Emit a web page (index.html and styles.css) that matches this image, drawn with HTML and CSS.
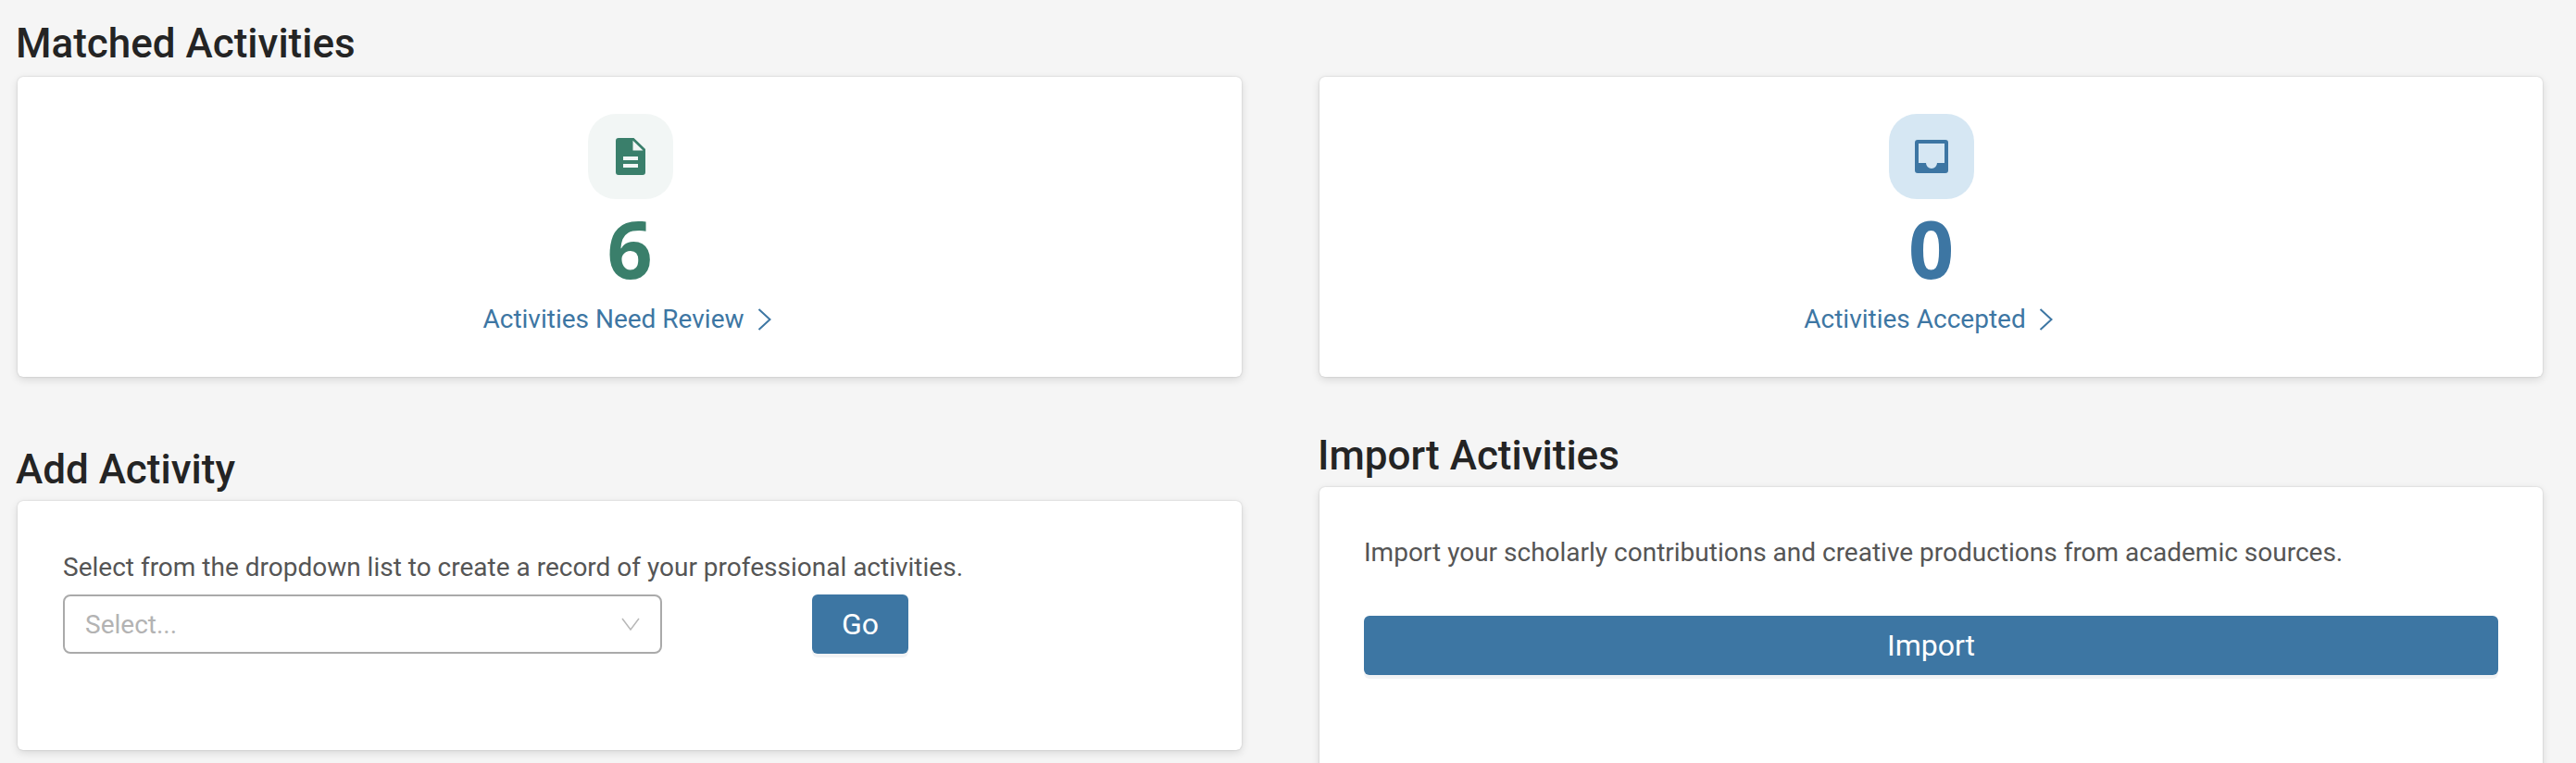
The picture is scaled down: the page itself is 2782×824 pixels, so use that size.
FILE: index.html
```html
<!DOCTYPE html>
<html lang="en">
<head>
    <meta charset="UTF-8">
    <title>Activities</title>
    <link rel="stylesheet" href="styles.css">
</head>
<body>
    <div class="page">
        <section class="column">
            <h2 class="section-title">Matched Activities</h2>
            <div class="card stat-card">
                <div class="stat-icon stat-icon-green">
                    <svg width="32" height="40" viewBox="0 0 32 40"><path fill-rule="evenodd" d="M3 0H19.5L32 12V37a3 3 0 0 1-3 3H3a3 3 0 0 1-3-3V3a3 3 0 0 1 3-3zM18.5 2.8V13.5H29.5zM8 20V24H24V20zM8 28V32H24V28z"/></svg>
                </div>
                <div class="stat-number stat-number-green">6</div>
                <a class="stat-link" href="#">Activities Need Review
                    <svg class="link-chevron" width="15" height="24" viewBox="0 0 15 24"><path d="M1.5 1L13.5 12L1.5 23"/></svg>
                </a>
            </div>
        </section>

        <section class="column">
            <h2 class="section-title section-title-hidden">Accepted</h2>
            <div class="card stat-card">
                <div class="stat-icon stat-icon-blue">
                    <svg width="36" height="36" viewBox="0 0 36 36"><path fill-rule="evenodd" d="M3 0H33a3 3 0 0 1 3 3V33a3 3 0 0 1-3 3H3a3 3 0 0 1-3-3V3a3 3 0 0 1 3-3zM4 4V25H12a6 6 0 0 0 12 0H32V4z"/></svg>
                </div>
                <div class="stat-number stat-number-blue">0</div>
                <a class="stat-link" href="#">Activities Accepted
                    <svg class="link-chevron" width="15" height="24" viewBox="0 0 15 24"><path d="M1.5 1L13.5 12L1.5 23"/></svg>
                </a>
            </div>
        </section>

        <section class="column add-column">
            <h2 class="section-title section-title-low">Add Activity</h2>
            <div class="card add-card">
                <p class="card-text">Select from the dropdown list to create a record of your professional activities.</p>
                <div class="add-row">
                    <div class="select-box">
                        <span class="select-placeholder">Select...</span>
                        <svg class="select-chevron" width="20" height="14" viewBox="0 0 20 14"><path d="M1 1L10 13L19 1"/></svg>
                    </div>
                    <button class="btn btn-go" type="button">Go</button>
                </div>
            </div>
        </section>

        <section class="column">
            <h2 class="section-title section-title-low">Import Activities</h2>
            <div class="card import-card">
                <p class="card-text">Import your scholarly contributions and creative productions from academic sources.</p>
                <button class="btn btn-import" type="button">Import</button>
            </div>
        </section>
    </div>
</body>
</html>
```

FILE: styles.css
```css
html, body {
    height: 824px;
    overflow: hidden;
}

body {
    font-family: Roboto, Arial, sans-serif;
    background-color: #f5f5f5;
    color: #555;
    margin: 0;
    padding: 0;
}

.page {
    display: grid;
    grid-template-columns: 1322px 1321px;
    column-gap: 84px;
    row-gap: 36px;
    padding: 0 36px 0 19px;
}

.section-title {
    font-size: 44px;
    line-height: 50px;
    font-weight: 500;
    color: #242424;
    margin: 0 0 0 -2px;
    padding: 22px 0 11px;
}

.section-title-low {
    padding: 24px 0 9px;
}

.section-title-hidden {
    visibility: hidden;
}

.add-column {
    padding-top: 15px;
}

.card {
    background-color: #fff;
    border-radius: 6px;
    box-shadow: 0 0 2px rgba(0, 0, 0, 0.18), 0 3px 10px rgba(0, 0, 0, 0.12);
}

.stat-card {
    height: 324px;
    box-sizing: border-box;
    padding-top: 40px;
    display: flex;
    flex-direction: column;
    align-items: center;
}

.stat-icon {
    width: 92px;
    height: 92px;
    border-radius: 30px;
    margin-left: 1px;
    display: flex;
    align-items: center;
    justify-content: center;
}

.stat-icon-green {
    background-color: #f2f6f5;
    fill: #3a7f6b;
}

.stat-icon-blue {
    background-color: #d6e7f3;
    fill: #3d76a3;
}

.stat-number {
    font-family: "Open Sans", Roboto, sans-serif;
    font-size: 86px;
    line-height: 100px;
    font-weight: 700;
    margin-top: 3px;
}

.stat-number-green {
    color: #3a7f6b;
}

.stat-number-blue {
    color: #3d76a3;
}

.stat-link {
    font-size: 28px;
    line-height: 40px;
    color: #3d76a3;
    text-decoration: none;
    display: flex;
    align-items: center;
    gap: 14px;
    margin-top: 7px;
    padding-right: 6px;
}

.link-chevron {
    fill: none;
    stroke: #3d76a3;
    stroke-width: 2;
}

.card-text {
    font-size: 28px;
    line-height: 40px;
    margin: 0;
}

.add-card {
    height: 269px;
    box-sizing: border-box;
    padding: 52px 49px 0;
}

.add-row {
    display: flex;
    align-items: flex-start;
    gap: 162px;
    margin-top: 9px;
}

.select-box {
    width: 647px;
    height: 64px;
    box-sizing: border-box;
    border: 2px solid #aaa;
    border-radius: 8px;
    padding: 0 22px;
    display: flex;
    align-items: center;
    justify-content: space-between;
}

.select-placeholder {
    font-size: 28px;
    color: #b3b3b3;
}

.select-chevron {
    fill: none;
    stroke: #b8b8b8;
    stroke-width: 1.5;
}

.btn {
    font-family: Roboto, Arial, sans-serif;
    font-size: 32px;
    color: #fff;
    background-color: #3d76a3;
    border: none;
    border-radius: 6px;
    height: 64px;
    padding: 0;
    box-shadow: 0 4px 0 #f2f3f5;
    cursor: pointer;
}

.btn-go {
    width: 104px;
}

.btn-import {
    display: block;
    width: 100%;
    margin-top: 48px;
}

.import-card {
    height: 320px;
    box-sizing: border-box;
    padding: 51px 48px 0;
}
```
